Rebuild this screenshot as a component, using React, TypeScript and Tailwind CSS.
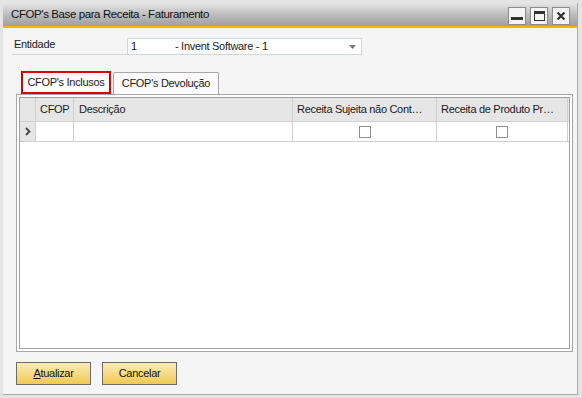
import React from 'react';

const font = { fontFamily: '"Liberation Sans", Arial, sans-serif' };

function WinButton({ kind }: { kind: 'min' | 'max' | 'close' }) {
  return (
    <div className="w-[18px] h-[18px] bg-[#f4f4f4] border border-[#8c8c8c] flex items-center justify-center">
      {kind === 'min' && <div className="w-[12px] h-[3px] bg-[#333] mt-[5px]" />}
      {kind === 'max' && <div className="w-[11px] h-[10px] border border-[#333] border-t-[3px]" />}
      {kind === 'close' && (
        <svg width="10" height="10" viewBox="0 0 10 10">
          <path d="M1.5 1.5 L8.5 8.5 M8.5 1.5 L1.5 8.5" stroke="#333" strokeWidth="2.2" />
        </svg>
      )}
    </div>
  );
}

function Check() {
  return <div className="w-[12px] h-[12px] border border-[#8f8f8f] bg-white" />;
}

export default function App() {
  return (
    <div className="w-[582px] h-[398px] bg-[#e4e4e4] p-[3px] pr-[4px] pb-[3px] text-[11px] tracking-[-0.3px] text-[#1a1a1a] whitespace-nowrap" style={font}>
      <div className="w-full h-full flex flex-col bg-[#f5f5f5] border-r border-b border-[#a8a8a8]">
        {/* title bar */}
        <div className="h-[25px] flex items-center justify-between pl-[8px] pr-[7px] bg-gradient-to-b from-[#e6e6e6] via-[#bdbdbd] to-[#9f9f9f] border-b-[2px] border-[#f2b705]">
          <span className="text-[11.5px] text-[#111] mt-[1px] tracking-[-0.4px]">CFOP's Base para Receita - Faturamento</span>
          <div className="flex gap-[4px] mt-[2px]">
            <WinButton kind="min" />
            <WinButton kind="max" />
            <WinButton kind="close" />
          </div>
        </div>

        {/* entidade */}
        <div className="flex items-end mt-[10px] ml-[9px]">
          <div className="w-[115px] h-[17px] border-b border-[#d4d4d4] pl-[2px] leading-[13px]">Entidade</div>
          <div className="w-[235px] h-[17px] bg-white border border-[#cfd6dc] flex items-center pl-[3px] pr-[5px] relative">
            <span className="w-[44px]">1</span>
            <span>- Invent Software - 1</span>
            <svg className="ml-auto" width="7" height="4" viewBox="0 0 7 4">
              <path d="M0 0 H7 L3.5 4 Z" fill="#7a7a7a" />
            </svg>
          </div>
        </div>

        {/* tabs */}
        <div className="flex items-end mt-[16px] ml-[18px] h-[23px]">
          <div className="w-[90px] h-[23px] border-2 border-[#e00000] bg-white flex items-center justify-center">CFOP's Inclusos</div>
          <div className="w-[106px] h-[22px] ml-[2px] border border-b-0 border-[#a6a6a6] rounded-t-[2px] bg-[#fafafa] flex items-center justify-center">CFOP's Devolução</div>
        </div>

        {/* panel */}
        <div className="ml-[13px] w-[557px] h-[258px] border border-[#a6a6a6] bg-white p-[2px]">
          <div className="w-full h-full border border-[#a0a0a0] bg-white flex flex-col">
            <div className="flex h-[24px] bg-[#e6e6e6] border-b border-[#d0d0d0]">
              <div className="w-[16px] border-r border-[#d0d0d0]" />
              <div className="w-[38px] border-r border-[#d0d0d0] flex items-center pl-[4px]">CFOP</div>
              <div className="w-[219px] border-r border-[#d0d0d0] flex items-center pl-[5px]">Descrição</div>
              <div className="w-[144px] border-r border-[#d0d0d0] flex items-center pl-[4px] overflow-hidden">Receita Sujeita não Cont…</div>
              <div className="w-[131px] border-r border-[#d0d0d0] flex items-center pl-[4px] overflow-hidden">Receita de Produto Pr…</div>
            </div>
            <div className="flex h-[20px] border-b border-[#d0d0d0]">
              <div className="w-[16px] bg-[#e6e6e6] border-r border-[#d0d0d0] flex items-center justify-center">
                <svg width="6" height="9" viewBox="0 0 6 9">
                  <path d="M1 1 L4.5 4.5 L1 8" stroke="#444" strokeWidth="1.8" fill="none" />
                </svg>
              </div>
              <div className="w-[38px] border-r border-[#d0d0d0]" />
              <div className="w-[219px] border-r border-[#d0d0d0]" />
              <div className="w-[144px] border-r border-[#d0d0d0] flex items-center justify-center pt-[1px]"><Check /></div>
              <div className="w-[131px] border-r border-[#d0d0d0] flex items-center justify-center pt-[1px]"><Check /></div>
            </div>
          </div>
        </div>

        {/* buttons */}
        <div className="flex gap-[11px] ml-[13px] mt-[10px]">
          <button className="w-[75px] h-[23px] border border-[#6b6b6b] bg-gradient-to-b from-[#fbecb4] to-[#f1c94e] text-[11px] text-[#111]">
            <span className="underline">A</span>tualizar
          </button>
          <button className="w-[75px] h-[23px] border border-[#6b6b6b] bg-gradient-to-b from-[#fbecb4] to-[#f1c94e] text-[11px] text-[#111]">
            Cancelar
          </button>
        </div>
      </div>
    </div>
  );
}
